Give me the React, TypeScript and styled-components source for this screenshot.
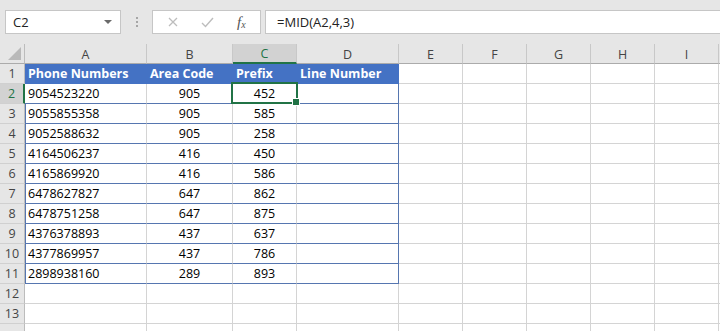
import styled, { createGlobalStyle } from 'styled-components';

const GlobalStyle = createGlobalStyle`
	html, body {
		margin: 0;
		padding: 0;
		background: #ffffff;
		overflow: hidden;
	}

	* {
		box-sizing: border-box;
	}
`;

const GREEN = '#217346';
const TABLE_BLUE = '#4472c4';
const TABLE_LINE = '#5676b0';
const GRID = '#d4d4d4';

const columns = [
	{ key: 'A', width: 122 },
	{ key: 'B', width: 86 },
	{ key: 'C', width: 64 },
	{ key: 'D', width: 102 },
	{ key: 'E', width: 64 },
	{ key: 'F', width: 64 },
	{ key: 'G', width: 64 },
	{ key: 'H', width: 64 },
	{ key: 'I', width: 64 },
];

const headers = ['Phone Numbers', 'Area Code', 'Prefix', 'Line Number'];

const rows = [
	['9054523220', '905', '452'],
	['9055855358', '905', '585'],
	['9052588632', '905', '258'],
	['4164506237', '416', '450'],
	['4165869920', '416', '586'],
	['6478627827', '647', '862'],
	['6478751258', '647', '875'],
	['4376378893', '437', '637'],
	['4377869957', '437', '786'],
	['2898938160', '289', '893'],
];

// 13 labelled rows, the 14th only peeks in at the bottom edge
const TOTAL_ROWS = 14;
const LABELLED_ROWS = 13;
const TABLE_COLS = 4;

const Page = styled.div`
	width: 720px;
	height: 331px;
	overflow: hidden;
	font-family: 'Open Sans', 'Liberation Sans', sans-serif;
	color: #000;
`;

const TopBar = styled.div`
	height: 44px;
	display: flex;
	align-items: flex-start;
	padding-top: 10px;
	background: #e6e6e6;
`;

const NameBox = styled.div`
	width: 116px;
	height: 24px;
	margin-left: 5px;

	display: flex;
	align-items: center;
	justify-content: space-between;
	padding: 0 8px 0 7px;

	background: #fff;
	border: 1px solid #c6c6c6;
	font-size: 13px;
	color: #222;
`;

const DropArrow = styled.span`
	width: 0;
	height: 0;
	border-left: 4px solid transparent;
	border-right: 4px solid transparent;
	border-top: 4px solid #6a6a6a;
`;

const Grip = styled.div`
	width: 31px;
	height: 24px;
	display: flex;
	flex-direction: column;
	align-items: center;
	justify-content: center;
	gap: 2px;

	span {
		width: 2px;
		height: 2px;
		background: #a6a6a6;
	}
`;

const FuncBox = styled.div`
	width: 109px;
	height: 24px;
	display: flex;
	align-items: center;
	padding-left: 3px;

	background: #fff;
	border: 1px solid #c6c6c6;
`;

const FuncButton = styled.div<{ $offset?: number }>`
	width: 33px;
	height: 100%;
	margin-left: ${(p) => p.$offset ?? 0}px;
	display: flex;
	align-items: center;
	justify-content: center;
	color: #bdbdbd;
`;

const Fx = styled.span`
	font-family: 'Liberation Serif', 'DejaVu Serif', serif;
	font-style: italic;
	font-size: 15px;
	color: #555;
	margin-left: 13px;

	sub {
		font-size: 10px;
		vertical-align: -1px;
	}
`;

const FormulaInput = styled.div`
	flex: 1;
	height: 24px;
	margin-left: 4px;

	display: flex;
	align-items: center;
	padding-left: 11px;

	background: #fff;
	border-top: 1px solid #c6c6c6;
	border-bottom: 1px solid #c6c6c6;
	border-left: 1px solid #c6c6c6;
	font-size: 13px;
	color: #222;
`;

const Sheet = styled.div`
	display: grid;
	grid-template-columns: 25px ${columns.map((c) => `${c.width}px`).join(' ')} 1fr;
	grid-auto-rows: 20px;
`;

const Corner = styled.div`
	position: relative;
	background: #e6e6e6;
	border-right: 1px solid #bcbcbc;
	border-bottom: 1px solid #ababab;

	&::after {
		content: '';
		position: absolute;
		right: 3px;
		bottom: 3px;
		width: 0;
		height: 0;
		border-left: 13px solid transparent;
		border-bottom: 13px solid #b9b9b9;
	}
`;

const ColHeader = styled.div<{ $active?: boolean }>`
	display: flex;
	align-items: center;
	justify-content: center;

	background: ${(p) => (p.$active ? '#d2d2d2' : '#e6e6e6')};
	border-right: 1px solid #c8c8c8;
	border-bottom: ${(p) => (p.$active ? `2px solid ${GREEN}` : '1px solid #ababab')};
	font-size: 12.5px;
	color: ${(p) => (p.$active ? GREEN : '#444')};
	padding-top: 1px;
`;

const RowHeader = styled.div<{ $active?: boolean }>`
	display: flex;
	align-items: center;
	justify-content: center;

	background: ${(p) => (p.$active ? '#d2d2d2' : '#e6e6e6')};
	border-right: ${(p) => (p.$active ? `2px solid ${GREEN}` : '1px solid #bcbcbc')};
	border-bottom: 1px solid #d0d0d0;
	font-size: 12.5px;
	color: ${(p) => (p.$active ? GREEN : '#444')};
`;

type CellProps = {
	$align?: 'left' | 'center';
	$head?: boolean;
	$inTable?: boolean;
	$lastTableCol?: boolean;
	$firstTableCol?: boolean;
};

const Cell = styled.div<CellProps>`
	position: relative;
	display: flex;
	align-items: center;
	justify-content: ${(p) => (p.$align === 'center' ? 'center' : 'flex-start')};
	padding: 0 3px;
	white-space: nowrap;
	overflow: visible;

	font-size: 12.5px;
	font-weight: ${(p) => (p.$head ? 700 : 400)};
	color: ${(p) => (p.$head ? '#fff' : '#000')};
	background: ${(p) => (p.$head ? TABLE_BLUE : '#fff')};

	border-right: 1px solid
		${(p) => (p.$head ? TABLE_BLUE : p.$lastTableCol ? TABLE_LINE : GRID)};
	border-bottom: 1px solid
		${(p) => (p.$head ? TABLE_BLUE : p.$inTable ? TABLE_LINE : GRID)};
	box-shadow: ${(p) => (p.$firstTableCol ? `inset 1px 0 0 ${TABLE_LINE}` : 'none')};
`;

const Selection = styled.div`
	position: absolute;
	left: -2px;
	top: -2px;
	right: -2px;
	bottom: -1px;
	border: 2px solid ${GREEN};
	pointer-events: none;
	z-index: 2;

	&::after {
		content: '';
		position: absolute;
		right: -4px;
		bottom: -4px;
		width: 6px;
		height: 6px;
		background: ${GREEN};
		border: 1px solid #fff;
	}
`;

const CancelIcon = () => (
	<svg width="10" height="10" viewBox="0 0 10 10">
		<path d="M1 1 L9 9 M9 1 L1 9" stroke="currentColor" strokeWidth="1.3" fill="none" />
	</svg>
);

const EnterIcon = () => (
	<svg width="13" height="11" viewBox="0 0 13 11">
		<path d="M1 6 L4.5 9.5 L12 1" stroke="currentColor" strokeWidth="1.4" fill="none" />
	</svg>
);

const App = () => {
	const cellValue = (r: number, c: number) => {
		if (r === 0) return c < headers.length ? headers[c] : '';
		const data = rows[r - 1];
		if (!data) return '';
		return data[c] ?? '';
	};

	return (
		<Page>
			<GlobalStyle />
			<TopBar>
				<NameBox>
					<span>C2</span>
					<DropArrow />
				</NameBox>
				<Grip>
					<span />
					<span />
					<span />
				</Grip>
				<FuncBox>
					<FuncButton>
						<CancelIcon />
					</FuncButton>
					<FuncButton $offset={2}>
						<EnterIcon />
					</FuncButton>
					<Fx>
						f<sub>x</sub>
					</Fx>
				</FuncBox>
				<FormulaInput>=MID(A2,4,3)</FormulaInput>
			</TopBar>

			<Sheet>
				<Corner />
				{columns.map((col) => (
					<ColHeader key={col.key} $active={col.key === 'C'}>
						{col.key}
					</ColHeader>
				))}
				<ColHeader />

				{Array.from({ length: TOTAL_ROWS }).map((_, r) => {
					const inTable = r <= rows.length;
					return [
						<RowHeader key={`rh${r}`} $active={r === 1}>
							{r < LABELLED_ROWS ? r + 1 : ''}
						</RowHeader>,
						...columns.map((col, c) => {
							const tableCell = inTable && c < TABLE_COLS;
							const value = tableCell ? cellValue(r, c) : '';
							const centered = r > 0 && (c === 1 || c === 2);
							return (
								<Cell
									key={`${r}-${col.key}`}
									$align={centered ? 'center' : 'left'}
									$head={tableCell && r === 0}
									$inTable={tableCell}
									$lastTableCol={tableCell && c === TABLE_COLS - 1}
									$firstTableCol={tableCell && c === 0 && r > 1}
								>
									{value}
									{r === 1 && col.key === 'C' && <Selection />}
								</Cell>
							);
						}),
						<Cell key={`${r}-end`} />,
					];
				})}
			</Sheet>
		</Page>
	);
};

export default App;
